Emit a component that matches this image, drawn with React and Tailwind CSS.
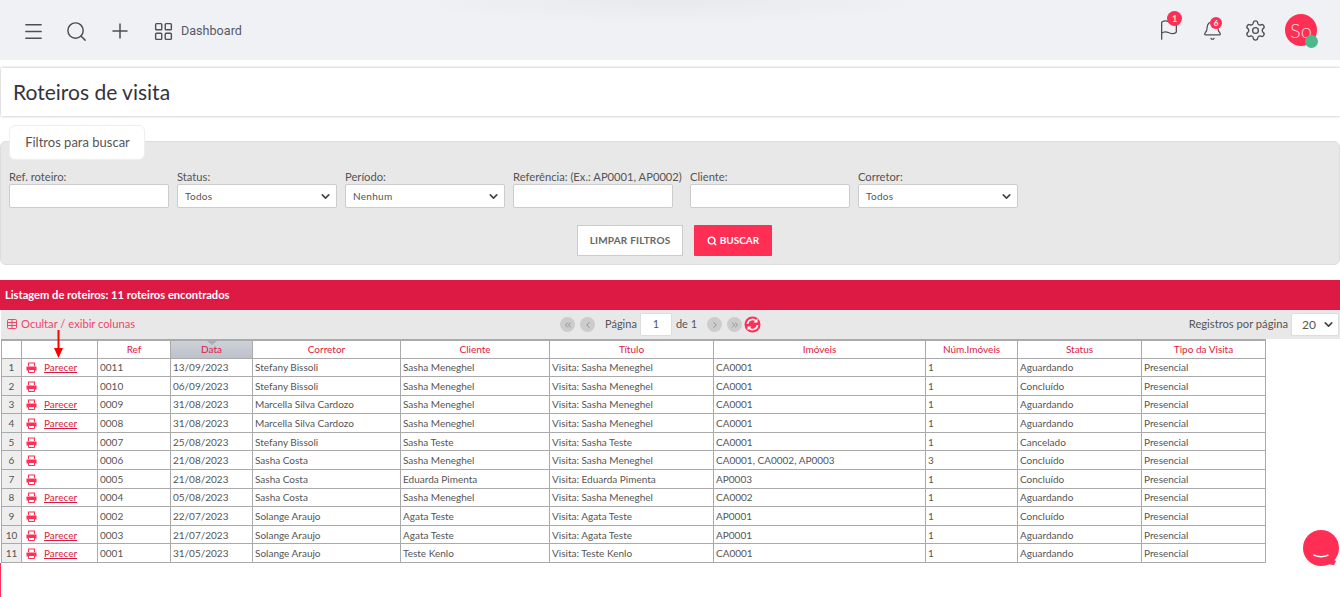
import React from 'react'
import { Menu, Search, Plus, LayoutGrid, Flag, Bell, Settings, ChevronsLeft, ChevronLeft, ChevronRight, ChevronsRight, ChevronDown, Table } from 'lucide-react'

const ROWS = [
  ['0011', '13/09/2023', 'Stefany Bissoli', 'Sasha Meneghel', 'Visita: Sasha Meneghel', 'CA0001', '1', 'Aguardando', true],
  ['0010', '06/09/2023', 'Stefany Bissoli', 'Sasha Meneghel', 'Visita: Sasha Meneghel', 'CA0001', '1', 'Concluído', false],
  ['0009', '31/08/2023', 'Marcella Silva Cardozo', 'Sasha Meneghel', 'Visita: Sasha Meneghel', 'CA0001', '1', 'Aguardando', true],
  ['0008', '31/08/2023', 'Marcella Silva Cardozo', 'Sasha Meneghel', 'Visita: Sasha Meneghel', 'CA0001', '1', 'Aguardando', true],
  ['0007', '25/08/2023', 'Stefany Bissoli', 'Sasha Teste', 'Visita: Sasha Teste', 'CA0001', '1', 'Cancelado', false],
  ['0006', '21/08/2023', 'Sasha Costa', 'Sasha Meneghel', 'Visita: Sasha Meneghel', 'CA0001, CA0002, AP0003', '3', 'Concluído', false],
  ['0005', '21/08/2023', 'Sasha Costa', 'Eduarda Pimenta', 'Visita: Eduarda Pimenta', 'AP0003', '1', 'Concluído', false],
  ['0004', '05/08/2023', 'Sasha Costa', 'Sasha Meneghel', 'Visita: Sasha Meneghel', 'CA0002', '1', 'Aguardando', true],
  ['0002', '22/07/2023', 'Solange Araujo', 'Agata Teste', 'Visita: Agata Teste', 'AP0001', '1', 'Concluído', false],
  ['0003', '21/07/2023', 'Solange Araujo', 'Agata Teste', 'Visita: Agata Teste', 'AP0001', '1', 'Aguardando', true],
  ['0001', '31/05/2023', 'Solange Araujo', 'Teste Kenlo', 'Visita: Teste Kenlo', 'CA0001', '1', 'Aguardando', true],
]

const COLS = [20, 76, 73, 82, 148, 149, 164, 212, 92, 124, 124]
const HEADERS = ['', '', 'Ref', 'Data', 'Corretor', 'Cliente', 'Título', 'Imóveis', 'Núm.Imóveis', 'Status', 'Tipo da Visita']

function Printer() {
  return (
    <svg width="11" height="11" viewBox="0 0 11 11" className="shrink-0">
      <path d="M2.5 4V1h6v3" fill="none" stroke="#fe2e55" strokeWidth="1.1" />
      <path d="M0.5 4.5h10v4h-10z" fill="#fe2e55" />
      <path d="M2.5 7.5h6v3h-6z" fill="#fff" stroke="#fe2e55" strokeWidth="1" />
    </svg>
  )
}

function Field({ label, width, children }) {
  return (
    <div style={{ width }} className="shrink-0">
      <div className="text-[11.2px] leading-[15px] text-[#555] whitespace-nowrap">{label}</div>
      {children}
    </div>
  )
}

function TextBox() {
  return <div className="h-6 w-[160px] bg-white border border-[#ccc] rounded-[2px]" />
}

function SelectBox({ value }) {
  return (
    <div className="h-6 w-[160px] bg-white border border-[#ccc] rounded-[2px] flex items-center justify-between pl-[7px] pr-1 text-[10px] text-[#555] tracking-[0.3px]">
      <span>{value}</span>
      <ChevronDown size={13} strokeWidth={3} className="text-[#444]" />
    </div>
  )
}

function PageButton({ children }) {
  return <div className="w-[15px] h-[15px] rounded-full bg-[#ccc] flex items-center justify-center text-[#888]">{children}</div>
}

export default function App() {
  return (
    <div className="relative h-[597px] overflow-hidden bg-white font-['Lato','Open_Sans',sans-serif]">
      {/* top bar */}
      <header className="h-[60px] bg-[#f0f1f5] bg-[radial-gradient(ellipse_270px_24px_at_670px_0,#e8e9ed,#f0f1f5)] flex items-center justify-between pl-[22px] pr-[23px] text-[#4b4f56]">
        <div className="flex items-center mt-[2px]">
          <Menu size={23} strokeWidth={1.5} />
          <Search size={23} strokeWidth={1.5} className="ml-[20px]" />
          <Plus size={24} strokeWidth={1.5} className="ml-[20px]" />
          <LayoutGrid size={21} strokeWidth={1.6} className="ml-[21px]" />
          <span className="ml-[7px] text-[12.6px] text-[#555a66] font-['Roboto',sans-serif]">Dashboard</span>
        </div>
        <div className="flex items-center">
          <div className="relative">
            <Flag size={22} strokeWidth={1.4} />
            <span className="absolute -top-[8px] left-[9px] w-[15px] h-[15px] rounded-full bg-[#fe2e55] text-[#ffe9a8] text-[9px] font-bold flex items-center justify-center">1</span>
          </div>
          <div className="relative ml-[22px]">
            <Bell size={21} strokeWidth={1.4} />
            <span className="absolute -top-[3px] left-[8px] w-[12px] h-[12px] rounded-full bg-[#fe2e55] text-white text-[8px] font-bold flex items-center justify-center">6</span>
          </div>
          <Settings size={23} strokeWidth={1.4} className="ml-[21px]" />
          <div className="relative ml-[18px] w-8 h-8 rounded-full bg-[#fe2e55] text-[#ffd3dc] text-[20px] font-light flex items-center justify-center">
            So
            <span className="absolute left-[20px] top-[21px] w-[13px] h-[13px] rounded-full bg-[#4cb98a]" />
          </div>
        </div>
      </header>

      {/* page title */}
      <div className="mt-2 ml-px h-[48px] bg-white shadow-[0_0_3px_rgba(0,0,0,0.3)] flex items-center pl-3 text-[21px] text-[#33333d]">
        Roteiros de visita
      </div>

      {/* filters */}
      <div className="mt-[9px]">
        <div className="relative z-10 ml-[9px] w-[136px] h-[35px] bg-white rounded-[6px] border border-[#eee] flex items-center justify-center pl-px text-[13px] text-[#555]">
          Filtros para buscar
        </div>
        <div className="-mt-[19px] h-[124px] bg-[#e8e8e8] border border-[#ddd] rounded-[6px] pl-2 pt-[27px]">
          <div className="flex gap-2">
            <Field label="Ref. roteiro:" width={160}><TextBox /></Field>
            <Field label="Status:" width={160}><SelectBox value="Todos" /></Field>
            <Field label="Período:" width={160}><SelectBox value="Nenhum" /></Field>
            <Field label="Referência: (Ex.: AP0001, AP0002)" width={169}><TextBox /></Field>
            <Field label="Cliente:" width={160}><TextBox /></Field>
            <Field label="Corretor:" width={160}><SelectBox value="Todos" /></Field>
          </div>
          <div className="mt-[17px] flex pl-[568px] gap-[11px]">
            <div className="w-[106px] h-[31px] bg-white border border-[#ccc] flex items-center justify-center text-[10px] font-bold text-[#666] tracking-[0.2px]">LIMPAR FILTROS</div>
            <div className="w-[78px] h-[31px] bg-[#fe2e55] rounded-[1px] flex items-center justify-center gap-[3px] text-[10px] font-bold text-white">
              <Search size={10} strokeWidth={3.5} />
              BUSCAR
            </div>
          </div>
        </div>
      </div>

      {/* list */}
      <div className="mt-[15px] h-[30px] bg-[#dc1a43] flex items-center pl-[5px] text-[11.15px] font-bold text-white">
        Listagem de roteiros: 11 roteiros encontrados
      </div>
      <div className="ml-px h-[29px] bg-[#e8e8e8] relative flex items-center justify-between pl-[5px] pr-px text-[12px]">
        <div className="flex items-center gap-[3px] text-[#f0466a] text-[11.2px]">
          <Table size={12} strokeWidth={2} />
          Ocultar / exibir colunas
        </div>
        <div className="absolute left-[559px] top-[3px] flex items-center text-[#555]">
          <PageButton><ChevronsLeft size={10} /></PageButton>
          <span className="ml-[5px]"><PageButton><ChevronLeft size={10} /></PageButton></span>
          <span className="ml-[10px] text-[11px]">Página</span>
          <div className="ml-[3px] w-8 h-[23px] bg-white border border-[#ddd] rounded-[2px] flex items-center justify-center text-[11px]">1</div>
          <span className="ml-[4px] text-[11px]">de 1</span>
          <span className="ml-[10px]"><PageButton><ChevronRight size={10} /></PageButton></span>
          <span className="ml-[5px]"><PageButton><ChevronsRight size={10} /></PageButton></span>
          <svg width="17" height="17" viewBox="0 0 17 17" className="ml-[2px]">
            <circle cx="8.5" cy="8.5" r="8" fill="#fe2e55" />
            <path d="M3.5 8a5 5 0 0 1 8.6-3M13.5 9a5 5 0 0 1-8.6 3" fill="none" stroke="#fff" strokeWidth="1.8" />
            <path d="M13.5 2.5v4h-4zM3.5 14.5v-4h4z" fill="#fff" />
          </svg>
        </div>
        <div className="flex items-center text-[11.2px] text-[#555]">
          Registros por página
          <div className="ml-[3px] w-[48px] h-[23px] bg-white border border-[#ddd] rounded-[2px] flex items-center justify-between pl-[10px] pr-[3px] text-[12px]">
            20
            <ChevronDown size={13} strokeWidth={3} className="text-[#444]" />
          </div>
        </div>
      </div>

      <div className="relative">
        <table className="ml-px table-fixed border-collapse text-[10px] text-[#555] w-[1265px] border-t-2 border-[#aaa]">
          <colgroup>
            {COLS.map((w, i) => <col key={i} style={{ width: w }} />)}
          </colgroup>
          <thead>
            <tr className="h-[18px]">
              {HEADERS.map((h, i) => (
                <th key={i} className={`relative border border-[#aaa] p-0 pt-px font-normal text-center text-[#dc1a43] ${h === 'Data' ? 'bg-gradient-to-b from-[#cdd1d8] to-[#bcc0c9]' : ''}`}>
                  {h}
                  {h === 'Data' && <span className="absolute left-[36px] top-0 w-0 h-0 border-x-[5px] border-x-transparent border-t-[4px] border-t-[#a9adb6]" />}
                </th>
              ))}
            </tr>
          </thead>
          <tbody>
            {ROWS.map((r, i) => (
              <tr key={r[0]} className="h-[18.6px]">
                <td className="border border-[#aaa] p-0 pt-px text-center bg-[#eee]">{i + 1}</td>
                <td className="border border-[#aaa] p-0 pt-px pl-[4px]">
                  <div className="flex items-center gap-[7px]">
                    <Printer />
                    {r[8] && <span className="text-[#dc1a43] underline">Parecer</span>}
                  </div>
                </td>
                {r.slice(0, 8).map((c, j) => (
                  <td key={j} className="border border-[#aaa] p-0 pt-px pl-[2px] whitespace-nowrap">{c}</td>
                ))}
                <td className="border border-[#aaa] p-0 pt-px pl-[2px]">Presencial</td>
              </tr>
            ))}
          </tbody>
        </table>
        {/* arrow drawn on top of the first row */}
        <svg width="9" height="28" viewBox="0 0 9 28" className="absolute left-[54px] top-[-9px]">
          <path d="M3.5 0h2v18h3.5l-4.5 10-4.5-10h3.5z" fill="#f00" />
        </svg>
      </div>

      <div className="absolute left-0 top-[563px] bottom-0 w-px bg-[#fe2e55]" />

      {/* chat bubble */}
      <svg width="37" height="38" viewBox="0 0 37 38" className="absolute left-[1303px] top-[530px]">
        <circle cx="18" cy="18" r="18" fill="#fe2e55" />
        <path d="M27 28l6 3-2 4-8-1z" fill="#fe2e55" />
        <path d="M10.500 25q7.500 3.500 15 0" fill="none" stroke="#fff" strokeWidth="1.4" />
      </svg>
    </div>
  )
}
